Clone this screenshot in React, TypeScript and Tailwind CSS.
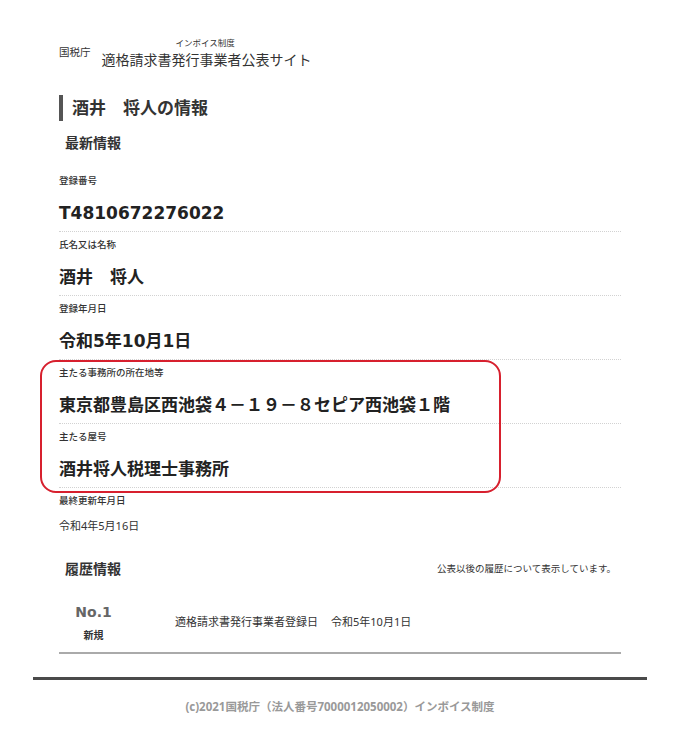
import React from "react";

const sans = "font-['Noto_Sans','Noto_Sans_CJK_JP',sans-serif]";
const wide = "font-['DejaVu_Sans','Noto_Sans_CJK_JP',sans-serif]";

function Field({ label, value, last }: { label: string; value: string; last?: boolean }) {
  return (
    <div className={`pt-[6px] ${last ? "" : "pb-[6px] border-b border-dotted border-[#d2d2d2]"}`}>
      <div className="text-[9.5px] leading-[14px] font-medium text-[#333]">{label}</div>
      {last ? (
        <div className="mt-[10px] text-[11px] leading-[16px] text-[#333]">{value}</div>
      ) : (
        <div className={`${wide} mt-[13px] text-[17px] leading-[24px] font-bold text-[#222]`}>{value}</div>
      )}
    </div>
  );
}

export default function App() {
  return (
    <div className={`relative w-[680px] min-h-[731px] bg-white ${sans} text-[#333]`}>
      <div className="mx-[33px]">
        <div className="mx-[26px]">
          {/* header */}
          <div className="pt-[37px] flex items-start">
            <div className="mt-[9px] text-[10.5px] leading-[12px] text-[#333]">国税庁</div>
            <div className="ml-[11px] flex flex-col">
              <div className="pl-[74px] text-[8.5px] leading-[12px] text-[#333]">インボイス制度</div>
              <div className="mt-[1px] text-[14px] leading-[20px] text-[#333]">適格請求書発行事業者公表サイト</div>
            </div>
          </div>

          {/* title */}
          <div className="mt-[25px] h-[26px] flex items-stretch">
            <div className="w-[4px] bg-[#555]" />
            <div className="ml-[9px] text-[17px] leading-[26px] font-bold text-[#333]">酒井　将人の情報</div>
          </div>

          <div className="mt-[12px] pl-[6px] text-[14px] leading-[20px] font-bold text-[#333]">最新情報</div>

          <div className="mt-[15px]">
            <Field label="登録番号" value="T4810672276022" />
            <Field label="氏名又は名称" value="酒井　将人" />
            <Field label="登録年月日" value="令和5年10月1日" />
            <Field label="主たる事務所の所在地等" value="東京都豊島区西池袋４－１９－８セピア西池袋１階" />
            <Field label="主たる屋号" value="酒井将人税理士事務所" />
            <Field label="最終更新年月日" value="令和4年5月16日" last />
          </div>

          <div className="mt-[25px] h-[20px] flex items-center justify-between">
            <div className="pl-[6px] text-[14px] leading-[20px] font-bold text-[#333]">履歴情報</div>
            <div className="pr-[5px] text-[9.5px] leading-[14px] text-[#333]">公表以後の履歴について表示しています。</div>
          </div>

          <div className="mt-[23px] pb-[10px] border-b-2 border-[#aaa] flex items-center">
            <div className="w-[69px] flex flex-col items-center">
              <div className={`${wide} text-[14px] leading-[20px] font-bold text-[#666]`}>No.1</div>
              <div className="mt-[6px] text-[10px] leading-[14px] font-bold text-[#333]">新規</div>
            </div>
            <div className="ml-[47px] flex items-center text-[11px] leading-[16px] text-[#333]">
              <span>適格請求書発行事業者登録日</span>
              <span className="ml-[13px]">令和5年10月1日</span>
            </div>
          </div>
        </div>

        <div className="mt-[23px] h-[3px] bg-[#4a4a4a]" />

        <div className="mt-[19px] text-center text-[11.5px] leading-[16px] font-bold text-[#999]">
          (c)2021国税庁（法人番号7000012050002）インボイス制度
        </div>
      </div>

      {/* red annotation box */}
      <div className="absolute left-[40px] top-[360px] w-[461px] h-[133px] border-[2.5px] border-[#d7202e] rounded-[16px] pointer-events-none" />
    </div>
  );
}
